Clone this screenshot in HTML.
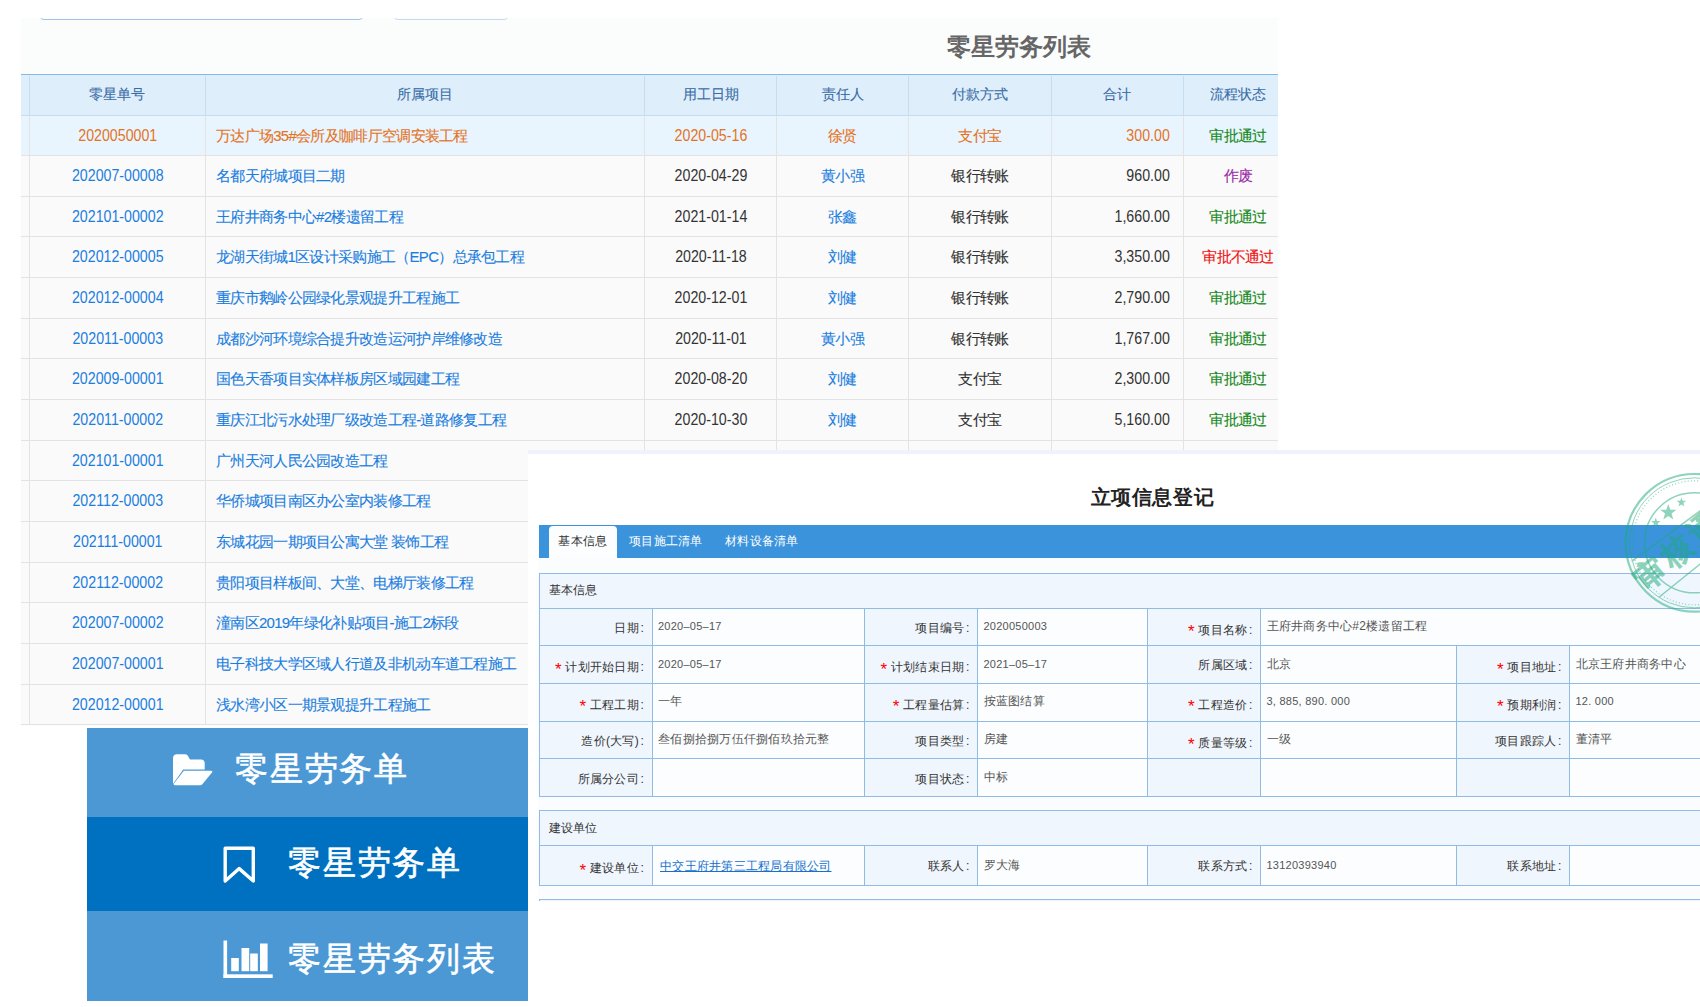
<!DOCTYPE html><html><head><meta charset="utf-8"><style>
*{margin:0;padding:0;box-sizing:border-box}
html,body{width:1700px;height:1007px;overflow:hidden;background:#fff;font-family:"Liberation Sans",sans-serif;position:relative}
.a{position:absolute}
.t{position:absolute;white-space:nowrap}
.rp{letter-spacing:0.25px}
.lt .t{-webkit-text-stroke:0.12px currentColor}
</style></head><body>
<div class="a" style="left:21px;top:18px;width:1257px;height:707.5px;background:#fbfcfc"></div>
<div class="a" style="left:0;top:18px;width:1700px;height:10px;overflow:hidden"><div class="a" style="left:39px;top:-10px;width:325px;height:11.5px;border:1px solid #9fc4e7;border-radius:5px"></div><div class="a" style="left:393px;top:-10px;width:116px;height:11.5px;border:1px solid #c3daef;border-radius:5px"></div></div>
<div class="t" style="left:900px;top:30px;width:238px;text-align:center;font-size:24px;line-height:34px;font-weight:bold;color:#666">零星劳务列表</div>
<div class="a" style="left:21px;top:74px;width:1257px;height:41.5px;background:#dfeefb;border-top:1.5px solid #82b8e8;border-bottom:1px solid #c7dcef"></div>
<div class="t" style="left:29.5px;top:74px;width:175.5px;height:41.5px;line-height:41.5px;text-align:center;font-size:14px;color:#386ca6;-webkit-text-stroke:0.12px #386ca6">零星单号</div>
<div class="t" style="left:205px;top:74px;width:439.6px;height:41.5px;line-height:41.5px;text-align:center;font-size:14px;color:#386ca6;-webkit-text-stroke:0.12px #386ca6">所属项目</div>
<div class="t" style="left:644.6px;top:74px;width:131.89999999999998px;height:41.5px;line-height:41.5px;text-align:center;font-size:14px;color:#386ca6;-webkit-text-stroke:0.12px #386ca6">用工日期</div>
<div class="t" style="left:776.5px;top:74px;width:132.0px;height:41.5px;line-height:41.5px;text-align:center;font-size:14px;color:#386ca6;-webkit-text-stroke:0.12px #386ca6">责任人</div>
<div class="t" style="left:908.5px;top:74px;width:142.70000000000005px;height:41.5px;line-height:41.5px;text-align:center;font-size:14px;color:#386ca6;-webkit-text-stroke:0.12px #386ca6">付款方式</div>
<div class="t" style="left:1051.2px;top:74px;width:131.79999999999995px;height:41.5px;line-height:41.5px;text-align:center;font-size:14px;color:#386ca6;-webkit-text-stroke:0.12px #386ca6">合计</div>
<div class="t" style="left:1183px;top:74px;width:110px;height:41.5px;line-height:41.5px;text-align:center;font-size:14px;color:#386ca6;-webkit-text-stroke:0.12px #386ca6">流程状态</div>
<div class="a lt" style="left:21px;top:0;width:1257px;height:1007px;overflow:hidden">
<div class="a" style="left:0;top:115.5px;width:1257px;height:40.66px;background:#e9f5fe;border-bottom:1px solid #e3e3e3"></div>
<div class="t" style="left:8.5px;width:175.5px;text-align:center;top:115.5px;height:40.66px;line-height:40.66px;font-size:16px;color:#e4731e;transform:scaleX(0.888);transform-origin:center;-webkit-text-stroke:0">2020050001</div>
<div class="t" style="left:195px;width:428.6px;text-align:left;top:115.5px;height:40.66px;line-height:40.66px;font-size:15px;letter-spacing:-0.7px;color:#e4731e">万达广场35#会所及咖啡厅空调安装工程</div>
<div class="t" style="left:623.6px;width:131.89999999999998px;text-align:center;top:115.5px;height:40.66px;line-height:40.66px;font-size:16px;color:#e4731e;transform:scaleX(0.888);transform-origin:center;-webkit-text-stroke:0">2020-05-16</div>
<div class="t" style="left:755.5px;width:132.0px;text-align:center;top:115.5px;height:40.66px;line-height:40.66px;font-size:15px;letter-spacing:-0.7px;color:#e4731e">徐贤</div>
<div class="t" style="left:887.5px;width:142.70000000000005px;text-align:center;top:115.5px;height:40.66px;line-height:40.66px;font-size:15px;letter-spacing:-0.7px;color:#e4731e">支付宝</div>
<div class="t" style="left:1030.2px;width:118.79999999999995px;text-align:right;top:115.5px;height:40.66px;line-height:40.66px;font-size:16px;color:#e4731e;transform:scaleX(0.888);transform-origin:right;-webkit-text-stroke:0">300.00</div>
<div class="t" style="left:1162px;width:110px;text-align:center;top:115.5px;height:40.66px;line-height:40.66px;font-size:15px;letter-spacing:-0.7px;color:#16891a">审批通过</div>
<div class="a" style="left:0;top:156.16px;width:1257px;height:40.66px;background:#fafafa;border-bottom:1px solid #e3e3e3"></div>
<div class="t" style="left:8.5px;width:175.5px;text-align:center;top:156.16px;height:40.66px;line-height:40.66px;font-size:16px;color:#1a7ee0;transform:scaleX(0.888);transform-origin:center;-webkit-text-stroke:0">202007-00008</div>
<div class="t" style="left:195px;width:428.6px;text-align:left;top:156.16px;height:40.66px;line-height:40.66px;font-size:15px;letter-spacing:-0.7px;color:#1a7ee0">名都天府城项目二期</div>
<div class="t" style="left:623.6px;width:131.89999999999998px;text-align:center;top:156.16px;height:40.66px;line-height:40.66px;font-size:16px;color:#333;transform:scaleX(0.888);transform-origin:center;-webkit-text-stroke:0">2020-04-29</div>
<div class="t" style="left:755.5px;width:132.0px;text-align:center;top:156.16px;height:40.66px;line-height:40.66px;font-size:15px;letter-spacing:-0.7px;color:#1a7ee0">黄小强</div>
<div class="t" style="left:887.5px;width:142.70000000000005px;text-align:center;top:156.16px;height:40.66px;line-height:40.66px;font-size:15px;letter-spacing:-0.7px;color:#333">银行转账</div>
<div class="t" style="left:1030.2px;width:118.79999999999995px;text-align:right;top:156.16px;height:40.66px;line-height:40.66px;font-size:16px;color:#333;transform:scaleX(0.888);transform-origin:right;-webkit-text-stroke:0">960.00</div>
<div class="t" style="left:1162px;width:110px;text-align:center;top:156.16px;height:40.66px;line-height:40.66px;font-size:15px;letter-spacing:-0.7px;color:#9a2aa8">作废</div>
<div class="a" style="left:0;top:196.82px;width:1257px;height:40.66px;background:#fafafa;border-bottom:1px solid #e3e3e3"></div>
<div class="t" style="left:8.5px;width:175.5px;text-align:center;top:196.82px;height:40.66px;line-height:40.66px;font-size:16px;color:#1a7ee0;transform:scaleX(0.888);transform-origin:center;-webkit-text-stroke:0">202101-00002</div>
<div class="t" style="left:195px;width:428.6px;text-align:left;top:196.82px;height:40.66px;line-height:40.66px;font-size:15px;letter-spacing:-0.7px;color:#1a7ee0">王府井商务中心#2楼遗留工程</div>
<div class="t" style="left:623.6px;width:131.89999999999998px;text-align:center;top:196.82px;height:40.66px;line-height:40.66px;font-size:16px;color:#333;transform:scaleX(0.888);transform-origin:center;-webkit-text-stroke:0">2021-01-14</div>
<div class="t" style="left:755.5px;width:132.0px;text-align:center;top:196.82px;height:40.66px;line-height:40.66px;font-size:15px;letter-spacing:-0.7px;color:#1a7ee0">张鑫</div>
<div class="t" style="left:887.5px;width:142.70000000000005px;text-align:center;top:196.82px;height:40.66px;line-height:40.66px;font-size:15px;letter-spacing:-0.7px;color:#333">银行转账</div>
<div class="t" style="left:1030.2px;width:118.79999999999995px;text-align:right;top:196.82px;height:40.66px;line-height:40.66px;font-size:16px;color:#333;transform:scaleX(0.888);transform-origin:right;-webkit-text-stroke:0">1,660.00</div>
<div class="t" style="left:1162px;width:110px;text-align:center;top:196.82px;height:40.66px;line-height:40.66px;font-size:15px;letter-spacing:-0.7px;color:#16891a">审批通过</div>
<div class="a" style="left:0;top:237.48px;width:1257px;height:40.66px;background:#fafafa;border-bottom:1px solid #e3e3e3"></div>
<div class="t" style="left:8.5px;width:175.5px;text-align:center;top:237.48px;height:40.66px;line-height:40.66px;font-size:16px;color:#1a7ee0;transform:scaleX(0.888);transform-origin:center;-webkit-text-stroke:0">202012-00005</div>
<div class="t" style="left:195px;width:428.6px;text-align:left;top:237.48px;height:40.66px;line-height:40.66px;font-size:15px;letter-spacing:-0.7px;color:#1a7ee0">龙湖天街城1区设计采购施工（EPC）总承包工程</div>
<div class="t" style="left:623.6px;width:131.89999999999998px;text-align:center;top:237.48px;height:40.66px;line-height:40.66px;font-size:16px;color:#333;transform:scaleX(0.888);transform-origin:center;-webkit-text-stroke:0">2020-11-18</div>
<div class="t" style="left:755.5px;width:132.0px;text-align:center;top:237.48px;height:40.66px;line-height:40.66px;font-size:15px;letter-spacing:-0.7px;color:#1a7ee0">刘健</div>
<div class="t" style="left:887.5px;width:142.70000000000005px;text-align:center;top:237.48px;height:40.66px;line-height:40.66px;font-size:15px;letter-spacing:-0.7px;color:#333">银行转账</div>
<div class="t" style="left:1030.2px;width:118.79999999999995px;text-align:right;top:237.48px;height:40.66px;line-height:40.66px;font-size:16px;color:#333;transform:scaleX(0.888);transform-origin:right;-webkit-text-stroke:0">3,350.00</div>
<div class="t" style="left:1162px;width:110px;text-align:center;top:237.48px;height:40.66px;line-height:40.66px;font-size:15px;letter-spacing:-0.7px;color:#f01010">审批不通过</div>
<div class="a" style="left:0;top:278.14px;width:1257px;height:40.66px;background:#fafafa;border-bottom:1px solid #e3e3e3"></div>
<div class="t" style="left:8.5px;width:175.5px;text-align:center;top:278.14px;height:40.66px;line-height:40.66px;font-size:16px;color:#1a7ee0;transform:scaleX(0.888);transform-origin:center;-webkit-text-stroke:0">202012-00004</div>
<div class="t" style="left:195px;width:428.6px;text-align:left;top:278.14px;height:40.66px;line-height:40.66px;font-size:15px;letter-spacing:-0.7px;color:#1a7ee0">重庆市鹅岭公园绿化景观提升工程施工</div>
<div class="t" style="left:623.6px;width:131.89999999999998px;text-align:center;top:278.14px;height:40.66px;line-height:40.66px;font-size:16px;color:#333;transform:scaleX(0.888);transform-origin:center;-webkit-text-stroke:0">2020-12-01</div>
<div class="t" style="left:755.5px;width:132.0px;text-align:center;top:278.14px;height:40.66px;line-height:40.66px;font-size:15px;letter-spacing:-0.7px;color:#1a7ee0">刘健</div>
<div class="t" style="left:887.5px;width:142.70000000000005px;text-align:center;top:278.14px;height:40.66px;line-height:40.66px;font-size:15px;letter-spacing:-0.7px;color:#333">银行转账</div>
<div class="t" style="left:1030.2px;width:118.79999999999995px;text-align:right;top:278.14px;height:40.66px;line-height:40.66px;font-size:16px;color:#333;transform:scaleX(0.888);transform-origin:right;-webkit-text-stroke:0">2,790.00</div>
<div class="t" style="left:1162px;width:110px;text-align:center;top:278.14px;height:40.66px;line-height:40.66px;font-size:15px;letter-spacing:-0.7px;color:#16891a">审批通过</div>
<div class="a" style="left:0;top:318.79999999999995px;width:1257px;height:40.66px;background:#fafafa;border-bottom:1px solid #e3e3e3"></div>
<div class="t" style="left:8.5px;width:175.5px;text-align:center;top:318.79999999999995px;height:40.66px;line-height:40.66px;font-size:16px;color:#1a7ee0;transform:scaleX(0.888);transform-origin:center;-webkit-text-stroke:0">202011-00003</div>
<div class="t" style="left:195px;width:428.6px;text-align:left;top:318.79999999999995px;height:40.66px;line-height:40.66px;font-size:15px;letter-spacing:-0.7px;color:#1a7ee0">成都沙河环境综合提升改造运河护岸维修改造</div>
<div class="t" style="left:623.6px;width:131.89999999999998px;text-align:center;top:318.79999999999995px;height:40.66px;line-height:40.66px;font-size:16px;color:#333;transform:scaleX(0.888);transform-origin:center;-webkit-text-stroke:0">2020-11-01</div>
<div class="t" style="left:755.5px;width:132.0px;text-align:center;top:318.79999999999995px;height:40.66px;line-height:40.66px;font-size:15px;letter-spacing:-0.7px;color:#1a7ee0">黄小强</div>
<div class="t" style="left:887.5px;width:142.70000000000005px;text-align:center;top:318.79999999999995px;height:40.66px;line-height:40.66px;font-size:15px;letter-spacing:-0.7px;color:#333">银行转账</div>
<div class="t" style="left:1030.2px;width:118.79999999999995px;text-align:right;top:318.79999999999995px;height:40.66px;line-height:40.66px;font-size:16px;color:#333;transform:scaleX(0.888);transform-origin:right;-webkit-text-stroke:0">1,767.00</div>
<div class="t" style="left:1162px;width:110px;text-align:center;top:318.79999999999995px;height:40.66px;line-height:40.66px;font-size:15px;letter-spacing:-0.7px;color:#16891a">审批通过</div>
<div class="a" style="left:0;top:359.46px;width:1257px;height:40.66px;background:#fafafa;border-bottom:1px solid #e3e3e3"></div>
<div class="t" style="left:8.5px;width:175.5px;text-align:center;top:359.46px;height:40.66px;line-height:40.66px;font-size:16px;color:#1a7ee0;transform:scaleX(0.888);transform-origin:center;-webkit-text-stroke:0">202009-00001</div>
<div class="t" style="left:195px;width:428.6px;text-align:left;top:359.46px;height:40.66px;line-height:40.66px;font-size:15px;letter-spacing:-0.7px;color:#1a7ee0">国色天香项目实体样板房区域园建工程</div>
<div class="t" style="left:623.6px;width:131.89999999999998px;text-align:center;top:359.46px;height:40.66px;line-height:40.66px;font-size:16px;color:#333;transform:scaleX(0.888);transform-origin:center;-webkit-text-stroke:0">2020-08-20</div>
<div class="t" style="left:755.5px;width:132.0px;text-align:center;top:359.46px;height:40.66px;line-height:40.66px;font-size:15px;letter-spacing:-0.7px;color:#1a7ee0">刘健</div>
<div class="t" style="left:887.5px;width:142.70000000000005px;text-align:center;top:359.46px;height:40.66px;line-height:40.66px;font-size:15px;letter-spacing:-0.7px;color:#333">支付宝</div>
<div class="t" style="left:1030.2px;width:118.79999999999995px;text-align:right;top:359.46px;height:40.66px;line-height:40.66px;font-size:16px;color:#333;transform:scaleX(0.888);transform-origin:right;-webkit-text-stroke:0">2,300.00</div>
<div class="t" style="left:1162px;width:110px;text-align:center;top:359.46px;height:40.66px;line-height:40.66px;font-size:15px;letter-spacing:-0.7px;color:#16891a">审批通过</div>
<div class="a" style="left:0;top:400.12px;width:1257px;height:40.66px;background:#fafafa;border-bottom:1px solid #e3e3e3"></div>
<div class="t" style="left:8.5px;width:175.5px;text-align:center;top:400.12px;height:40.66px;line-height:40.66px;font-size:16px;color:#1a7ee0;transform:scaleX(0.888);transform-origin:center;-webkit-text-stroke:0">202011-00002</div>
<div class="t" style="left:195px;width:428.6px;text-align:left;top:400.12px;height:40.66px;line-height:40.66px;font-size:15px;letter-spacing:-0.7px;color:#1a7ee0">重庆江北污水处理厂级改造工程-道路修复工程</div>
<div class="t" style="left:623.6px;width:131.89999999999998px;text-align:center;top:400.12px;height:40.66px;line-height:40.66px;font-size:16px;color:#333;transform:scaleX(0.888);transform-origin:center;-webkit-text-stroke:0">2020-10-30</div>
<div class="t" style="left:755.5px;width:132.0px;text-align:center;top:400.12px;height:40.66px;line-height:40.66px;font-size:15px;letter-spacing:-0.7px;color:#1a7ee0">刘健</div>
<div class="t" style="left:887.5px;width:142.70000000000005px;text-align:center;top:400.12px;height:40.66px;line-height:40.66px;font-size:15px;letter-spacing:-0.7px;color:#333">支付宝</div>
<div class="t" style="left:1030.2px;width:118.79999999999995px;text-align:right;top:400.12px;height:40.66px;line-height:40.66px;font-size:16px;color:#333;transform:scaleX(0.888);transform-origin:right;-webkit-text-stroke:0">5,160.00</div>
<div class="t" style="left:1162px;width:110px;text-align:center;top:400.12px;height:40.66px;line-height:40.66px;font-size:15px;letter-spacing:-0.7px;color:#16891a">审批通过</div>
<div class="a" style="left:0;top:440.78px;width:1257px;height:40.66px;background:#fafafa;border-bottom:1px solid #e3e3e3"></div>
<div class="t" style="left:8.5px;width:175.5px;text-align:center;top:440.78px;height:40.66px;line-height:40.66px;font-size:16px;color:#1a7ee0;transform:scaleX(0.888);transform-origin:center;-webkit-text-stroke:0">202101-00001</div>
<div class="t" style="left:195px;width:428.6px;text-align:left;top:440.78px;height:40.66px;line-height:40.66px;font-size:15px;letter-spacing:-0.7px;color:#1a7ee0">广州天河人民公园改造工程</div>
<div class="a" style="left:0;top:481.43999999999994px;width:1257px;height:40.66px;background:#fafafa;border-bottom:1px solid #e3e3e3"></div>
<div class="t" style="left:8.5px;width:175.5px;text-align:center;top:481.43999999999994px;height:40.66px;line-height:40.66px;font-size:16px;color:#1a7ee0;transform:scaleX(0.888);transform-origin:center;-webkit-text-stroke:0">202112-00003</div>
<div class="t" style="left:195px;width:428.6px;text-align:left;top:481.43999999999994px;height:40.66px;line-height:40.66px;font-size:15px;letter-spacing:-0.7px;color:#1a7ee0">华侨城项目南区办公室内装修工程</div>
<div class="a" style="left:0;top:522.0999999999999px;width:1257px;height:40.66px;background:#fafafa;border-bottom:1px solid #e3e3e3"></div>
<div class="t" style="left:8.5px;width:175.5px;text-align:center;top:522.0999999999999px;height:40.66px;line-height:40.66px;font-size:16px;color:#1a7ee0;transform:scaleX(0.888);transform-origin:center;-webkit-text-stroke:0">202111-00001</div>
<div class="t" style="left:195px;width:428.6px;text-align:left;top:522.0999999999999px;height:40.66px;line-height:40.66px;font-size:15px;letter-spacing:-0.7px;color:#1a7ee0">东城花园一期项目公寓大堂 装饰工程</div>
<div class="a" style="left:0;top:562.76px;width:1257px;height:40.66px;background:#fafafa;border-bottom:1px solid #e3e3e3"></div>
<div class="t" style="left:8.5px;width:175.5px;text-align:center;top:562.76px;height:40.66px;line-height:40.66px;font-size:16px;color:#1a7ee0;transform:scaleX(0.888);transform-origin:center;-webkit-text-stroke:0">202112-00002</div>
<div class="t" style="left:195px;width:428.6px;text-align:left;top:562.76px;height:40.66px;line-height:40.66px;font-size:15px;letter-spacing:-0.7px;color:#1a7ee0">贵阳项目样板间、大堂、电梯厅装修工程</div>
<div class="a" style="left:0;top:603.42px;width:1257px;height:40.66px;background:#fafafa;border-bottom:1px solid #e3e3e3"></div>
<div class="t" style="left:8.5px;width:175.5px;text-align:center;top:603.42px;height:40.66px;line-height:40.66px;font-size:16px;color:#1a7ee0;transform:scaleX(0.888);transform-origin:center;-webkit-text-stroke:0">202007-00002</div>
<div class="t" style="left:195px;width:428.6px;text-align:left;top:603.42px;height:40.66px;line-height:40.66px;font-size:15px;letter-spacing:-0.7px;color:#1a7ee0">潼南区2019年绿化补贴项目-施工2标段</div>
<div class="a" style="left:0;top:644.0799999999999px;width:1257px;height:40.66px;background:#fafafa;border-bottom:1px solid #e3e3e3"></div>
<div class="t" style="left:8.5px;width:175.5px;text-align:center;top:644.0799999999999px;height:40.66px;line-height:40.66px;font-size:16px;color:#1a7ee0;transform:scaleX(0.888);transform-origin:center;-webkit-text-stroke:0">202007-00001</div>
<div class="t" style="left:195px;width:428.6px;text-align:left;top:644.0799999999999px;height:40.66px;line-height:40.66px;font-size:15px;letter-spacing:-0.7px;color:#1a7ee0">电子科技大学区域人行道及非机动车道工程施工</div>
<div class="a" style="left:0;top:684.74px;width:1257px;height:40.66px;background:#fafafa;border-bottom:1px solid #e3e3e3"></div>
<div class="t" style="left:8.5px;width:175.5px;text-align:center;top:684.74px;height:40.66px;line-height:40.66px;font-size:16px;color:#1a7ee0;transform:scaleX(0.888);transform-origin:center;-webkit-text-stroke:0">202012-00001</div>
<div class="t" style="left:195px;width:428.6px;text-align:left;top:684.74px;height:40.66px;line-height:40.66px;font-size:15px;letter-spacing:-0.7px;color:#1a7ee0">浅水湾小区一期景观提升工程施工</div>
<div class="a" style="left:8.0px;top:75.5px;width:1px;height:39.0px;background:#c6dcef"></div>
<div class="a" style="left:8.0px;top:115.5px;width:1px;height:609.9px;background:#e3e3e3"></div>
<div class="a" style="left:183.5px;top:75.5px;width:1px;height:39.0px;background:#c6dcef"></div>
<div class="a" style="left:183.5px;top:115.5px;width:1px;height:609.9px;background:#e3e3e3"></div>
<div class="a" style="left:623.1px;top:75.5px;width:1px;height:39.0px;background:#c6dcef"></div>
<div class="a" style="left:623.1px;top:115.5px;width:1px;height:609.9px;background:#e3e3e3"></div>
<div class="a" style="left:755.0px;top:75.5px;width:1px;height:39.0px;background:#c6dcef"></div>
<div class="a" style="left:755.0px;top:115.5px;width:1px;height:609.9px;background:#e3e3e3"></div>
<div class="a" style="left:887.0px;top:75.5px;width:1px;height:39.0px;background:#c6dcef"></div>
<div class="a" style="left:887.0px;top:115.5px;width:1px;height:609.9px;background:#e3e3e3"></div>
<div class="a" style="left:1029.7px;top:75.5px;width:1px;height:39.0px;background:#c6dcef"></div>
<div class="a" style="left:1029.7px;top:115.5px;width:1px;height:609.9px;background:#e3e3e3"></div>
<div class="a" style="left:1161.5px;top:75.5px;width:1px;height:39.0px;background:#c6dcef"></div>
<div class="a" style="left:1161.5px;top:115.5px;width:1px;height:609.9px;background:#e3e3e3"></div>
</div>
<div class="a" style="left:87px;top:728px;width:441px;height:89px;background:#4b98d5"></div>
<div class="a" style="left:87px;top:817px;width:441px;height:94px;background:#0070c1"></div>
<div class="a" style="left:87px;top:911px;width:441px;height:89.6px;background:#4b98d5"></div>
<div class="t" style="left:235px;top:744.5px;font-size:33px;line-height:48px;letter-spacing:1.8px;color:#fff;-webkit-text-stroke:0.6px #fff">零星劳务单</div>
<div class="t" style="left:288px;top:838.5px;font-size:33px;line-height:48px;letter-spacing:1.8px;color:#fff;-webkit-text-stroke:0.6px #fff">零星劳务单</div>
<div class="t" style="left:288px;top:934.5px;font-size:33px;line-height:48px;letter-spacing:1.8px;color:#fff;-webkit-text-stroke:0.6px #fff">零星劳务列表</div>
<svg class="a" style="left:0;top:0" width="1700" height="1007" viewBox="0 0 1700 1007">
<path d="M173,758 Q173,754.2 177,754.2 L185.5,754.2 Q187,754.2 188,756 L190,759.6 L201,759.6 Q204.7,759.6 204.7,763.5 L204.7,769.6 L183.2,769.6 L173,784 Z" fill="#fff"/>
<path d="M175,785.2 Q173,785.2 174,783.6 L183.8,770.8 L211,770.8 Q213.2,770.8 212,772.5 L202.5,784 Q201.5,785.2 200,785.2 Z" fill="#fff"/>
<path d="M225.2,881 L225.2,848.2 L253.3,848.2 L253.3,881 L239.2,868.6 Z" fill="none" stroke="#fff" stroke-width="3.4" stroke-linejoin="round"/>
<rect x="223.5" y="940.5" width="3.6" height="37.5" fill="#fff"/>
<rect x="223.5" y="974.3" width="49.2" height="3.7" fill="#fff"/>
<rect x="231.2" y="958" width="7.6" height="13.2" fill="#fff"/>
<rect x="241.5" y="948" width="7.7" height="23.2" fill="#fff"/>
<rect x="250.2" y="953.5" width="7.6" height="17.7" fill="#fff"/>
<rect x="260" y="943.5" width="7.6" height="27.7" fill="#fff"/>
</svg>
<div class="a" style="left:528px;top:449.8px;width:1172px;height:452px;background:#fff"></div>
<div class="a" style="left:528px;top:449.8px;width:1172px;height:4.2px;background:#eef2fb"></div>
<div class="a" style="left:538px;top:558px;width:1162px;height:343.5px;background:#fafcfe"></div>
<div class="t rp" style="left:1051.5px;top:481.5px;width:202px;text-align:center;font-size:20px;line-height:30px;font-weight:bold;letter-spacing:0.6px;color:#222">立项信息登记</div>
<div class="a" style="left:538.5px;top:524.5px;width:1162px;height:33.7px;background:#3b93dc"></div>
<div class="a" style="left:548.5px;top:525.5px;width:68.5px;height:32.5px;background:#fbfdff;border-radius:4px 4px 0 0"></div>
<div class="t rp" style="left:548.5px;top:525.5px;width:68.5px;text-align:center;font-size:12px;line-height:30px;color:#333">基本信息</div>
<div class="t rp" style="left:629px;top:525.5px;font-size:12px;line-height:30px;color:#fff">项目施工清单</div>
<div class="t rp" style="left:725px;top:525.5px;font-size:12px;line-height:30px;color:#fff">材料设备清单</div>
<div class="a" style="left:538.5px;top:573.2px;width:1161.5px;height:35.0px;background:#f0f6fe;"></div>
<div class="t rp" style="left:548.5px;top:573.2px;font-size:12px;line-height:35.0px;color:#333">基本信息</div>
<div class="a" style="left:538.5px;top:608.2px;width:113.5px;height:37.299999999999955px;background:#f0f6fd;"></div>
<div class="t rp" style="left:538.5px;width:105.5px;text-align:right;top:609.8000000000001px;line-height:37.299999999999955px;font-size:12px;color:#333">日期<span style="margin-left:1.5px">:</span></div>
<div class="a" style="left:652px;top:608.2px;width:212.5px;height:37.299999999999955px;background:#fbfdfe;"></div>
<div class="t rp" style="left:658px;top:609.2px;line-height:35.299999999999955px;font-size:11px;color:#555">2020–05–17</div>
<div class="a" style="left:864.5px;top:608.2px;width:113.0px;height:37.299999999999955px;background:#f0f6fd;"></div>
<div class="t rp" style="left:864.5px;width:105.0px;text-align:right;top:609.8000000000001px;line-height:37.299999999999955px;font-size:12px;color:#333">项目编号<span style="margin-left:1.5px">:</span></div>
<div class="a" style="left:977.5px;top:608.2px;width:170.0px;height:37.299999999999955px;background:#fbfdfe;"></div>
<div class="t rp" style="left:983.5px;top:609.2px;line-height:35.299999999999955px;font-size:11px;color:#555">2020050003</div>
<div class="a" style="left:1147.5px;top:608.2px;width:113.0px;height:37.299999999999955px;background:#f0f6fd;"></div>
<div class="t rp" style="left:1147.5px;width:105.0px;text-align:right;top:609.8000000000001px;line-height:37.299999999999955px;font-size:12px;color:#333"><span style="color:#f00;font-size:17px;margin-right:3.5px;position:relative;top:3.5px">*</span>项目名称<span style="margin-left:1.5px">:</span></div>
<div class="a" style="left:1260.5px;top:608.2px;width:539.5px;height:37.299999999999955px;background:#fbfdfe;"></div>
<div class="t rp" style="left:1266.5px;top:609.2px;line-height:35.299999999999955px;font-size:12px;color:#555">王府井商务中心#2楼遗留工程</div>
<div class="a" style="left:538.5px;top:645.5px;width:113.5px;height:37.799999999999955px;background:#f0f6fd;"></div>
<div class="t rp" style="left:538.5px;width:105.5px;text-align:right;top:647.1px;line-height:37.799999999999955px;font-size:12px;color:#333"><span style="color:#f00;font-size:17px;margin-right:3.5px;position:relative;top:3.5px">*</span>计划开始日期<span style="margin-left:1.5px">:</span></div>
<div class="a" style="left:652px;top:645.5px;width:212.5px;height:37.799999999999955px;background:#fbfdfe;"></div>
<div class="t rp" style="left:658px;top:646.5px;line-height:35.799999999999955px;font-size:11px;color:#555">2020–05–17</div>
<div class="a" style="left:864.5px;top:645.5px;width:113.0px;height:37.799999999999955px;background:#f0f6fd;"></div>
<div class="t rp" style="left:864.5px;width:105.0px;text-align:right;top:647.1px;line-height:37.799999999999955px;font-size:12px;color:#333"><span style="color:#f00;font-size:17px;margin-right:3.5px;position:relative;top:3.5px">*</span>计划结束日期<span style="margin-left:1.5px">:</span></div>
<div class="a" style="left:977.5px;top:645.5px;width:170.0px;height:37.799999999999955px;background:#fbfdfe;"></div>
<div class="t rp" style="left:983.5px;top:646.5px;line-height:35.799999999999955px;font-size:11px;color:#555">2021–05–17</div>
<div class="a" style="left:1147.5px;top:645.5px;width:113.0px;height:37.799999999999955px;background:#f0f6fd;"></div>
<div class="t rp" style="left:1147.5px;width:105.0px;text-align:right;top:647.1px;line-height:37.799999999999955px;font-size:12px;color:#333">所属区域<span style="margin-left:1.5px">:</span></div>
<div class="a" style="left:1260.5px;top:645.5px;width:196.0px;height:37.799999999999955px;background:#fbfdfe;"></div>
<div class="t rp" style="left:1266.5px;top:646.5px;line-height:35.799999999999955px;font-size:12px;color:#555">北京</div>
<div class="a" style="left:1456.5px;top:645.5px;width:113.0px;height:37.799999999999955px;background:#f0f6fd;"></div>
<div class="t rp" style="left:1456.5px;width:105.0px;text-align:right;top:647.1px;line-height:37.799999999999955px;font-size:12px;color:#333"><span style="color:#f00;font-size:17px;margin-right:3.5px;position:relative;top:3.5px">*</span>项目地址<span style="margin-left:1.5px">:</span></div>
<div class="a" style="left:1569.5px;top:645.5px;width:230.5px;height:37.799999999999955px;background:#fbfdfe;"></div>
<div class="t rp" style="left:1575.5px;top:646.5px;line-height:35.799999999999955px;font-size:12px;color:#555">北京王府井商务中心</div>
<div class="a" style="left:538.5px;top:683.3px;width:113.5px;height:37.80000000000007px;background:#f0f6fd;"></div>
<div class="t rp" style="left:538.5px;width:105.5px;text-align:right;top:684.9px;line-height:37.80000000000007px;font-size:12px;color:#333"><span style="color:#f00;font-size:17px;margin-right:3.5px;position:relative;top:3.5px">*</span>工程工期<span style="margin-left:1.5px">:</span></div>
<div class="a" style="left:652px;top:683.3px;width:212.5px;height:37.80000000000007px;background:#fbfdfe;"></div>
<div class="t rp" style="left:658px;top:684.3px;line-height:35.80000000000007px;font-size:12px;color:#555">一年</div>
<div class="a" style="left:864.5px;top:683.3px;width:113.0px;height:37.80000000000007px;background:#f0f6fd;"></div>
<div class="t rp" style="left:864.5px;width:105.0px;text-align:right;top:684.9px;line-height:37.80000000000007px;font-size:12px;color:#333"><span style="color:#f00;font-size:17px;margin-right:3.5px;position:relative;top:3.5px">*</span>工程量估算<span style="margin-left:1.5px">:</span></div>
<div class="a" style="left:977.5px;top:683.3px;width:170.0px;height:37.80000000000007px;background:#fbfdfe;"></div>
<div class="t rp" style="left:983.5px;top:684.3px;line-height:35.80000000000007px;font-size:12px;color:#555">按蓝图结算</div>
<div class="a" style="left:1147.5px;top:683.3px;width:113.0px;height:37.80000000000007px;background:#f0f6fd;"></div>
<div class="t rp" style="left:1147.5px;width:105.0px;text-align:right;top:684.9px;line-height:37.80000000000007px;font-size:12px;color:#333"><span style="color:#f00;font-size:17px;margin-right:3.5px;position:relative;top:3.5px">*</span>工程造价<span style="margin-left:1.5px">:</span></div>
<div class="a" style="left:1260.5px;top:683.3px;width:196.0px;height:37.80000000000007px;background:#fbfdfe;"></div>
<div class="t rp" style="left:1266.5px;top:684.3px;line-height:35.80000000000007px;font-size:11px;color:#555">3, 885, 890. 000</div>
<div class="a" style="left:1456.5px;top:683.3px;width:113.0px;height:37.80000000000007px;background:#f0f6fd;"></div>
<div class="t rp" style="left:1456.5px;width:105.0px;text-align:right;top:684.9px;line-height:37.80000000000007px;font-size:12px;color:#333"><span style="color:#f00;font-size:17px;margin-right:3.5px;position:relative;top:3.5px">*</span>预期利润<span style="margin-left:1.5px">:</span></div>
<div class="a" style="left:1569.5px;top:683.3px;width:230.5px;height:37.80000000000007px;background:#fbfdfe;"></div>
<div class="t rp" style="left:1575.5px;top:684.3px;line-height:35.80000000000007px;font-size:11px;color:#555">12. 000</div>
<div class="a" style="left:538.5px;top:721.1px;width:113.5px;height:37.799999999999955px;background:#f0f6fd;"></div>
<div class="t rp" style="left:538.5px;width:105.5px;text-align:right;top:722.7px;line-height:37.799999999999955px;font-size:12px;color:#333">造价(大写)<span style="margin-left:1.5px">:</span></div>
<div class="a" style="left:652px;top:721.1px;width:212.5px;height:37.799999999999955px;background:#fbfdfe;"></div>
<div class="t rp" style="left:658px;top:722.1px;line-height:35.799999999999955px;font-size:12px;color:#555">叁佰捌拾捌万伍仟捌佰玖拾元整</div>
<div class="a" style="left:864.5px;top:721.1px;width:113.0px;height:37.799999999999955px;background:#f0f6fd;"></div>
<div class="t rp" style="left:864.5px;width:105.0px;text-align:right;top:722.7px;line-height:37.799999999999955px;font-size:12px;color:#333">项目类型<span style="margin-left:1.5px">:</span></div>
<div class="a" style="left:977.5px;top:721.1px;width:170.0px;height:37.799999999999955px;background:#fbfdfe;"></div>
<div class="t rp" style="left:983.5px;top:722.1px;line-height:35.799999999999955px;font-size:12px;color:#555">房建</div>
<div class="a" style="left:1147.5px;top:721.1px;width:113.0px;height:37.799999999999955px;background:#f0f6fd;"></div>
<div class="t rp" style="left:1147.5px;width:105.0px;text-align:right;top:722.7px;line-height:37.799999999999955px;font-size:12px;color:#333"><span style="color:#f00;font-size:17px;margin-right:3.5px;position:relative;top:3.5px">*</span>质量等级<span style="margin-left:1.5px">:</span></div>
<div class="a" style="left:1260.5px;top:721.1px;width:196.0px;height:37.799999999999955px;background:#fbfdfe;"></div>
<div class="t rp" style="left:1266.5px;top:722.1px;line-height:35.799999999999955px;font-size:12px;color:#555">一级</div>
<div class="a" style="left:1456.5px;top:721.1px;width:113.0px;height:37.799999999999955px;background:#f0f6fd;"></div>
<div class="t rp" style="left:1456.5px;width:105.0px;text-align:right;top:722.7px;line-height:37.799999999999955px;font-size:12px;color:#333">项目跟踪人<span style="margin-left:1.5px">:</span></div>
<div class="a" style="left:1569.5px;top:721.1px;width:230.5px;height:37.799999999999955px;background:#fbfdfe;"></div>
<div class="t rp" style="left:1575.5px;top:722.1px;line-height:35.799999999999955px;font-size:12px;color:#555">董清平</div>
<div class="a" style="left:538.5px;top:758.9px;width:113.5px;height:37.5px;background:#f0f6fd;"></div>
<div class="t rp" style="left:538.5px;width:105.5px;text-align:right;top:760.5px;line-height:37.5px;font-size:12px;color:#333">所属分公司<span style="margin-left:1.5px">:</span></div>
<div class="a" style="left:652px;top:758.9px;width:212.5px;height:37.5px;background:#fbfdfe;"></div>
<div class="a" style="left:864.5px;top:758.9px;width:113.0px;height:37.5px;background:#f0f6fd;"></div>
<div class="t rp" style="left:864.5px;width:105.0px;text-align:right;top:760.5px;line-height:37.5px;font-size:12px;color:#333">项目状态<span style="margin-left:1.5px">:</span></div>
<div class="a" style="left:977.5px;top:758.9px;width:170.0px;height:37.5px;background:#fbfdfe;"></div>
<div class="t rp" style="left:983.5px;top:759.9px;line-height:35.5px;font-size:12px;color:#555">中标</div>
<div class="a" style="left:1147.5px;top:758.9px;width:113.0px;height:37.5px;background:#f0f6fd;"></div>
<div class="a" style="left:1260.5px;top:758.9px;width:196.0px;height:37.5px;background:#fbfdfe;"></div>
<div class="a" style="left:1456.5px;top:758.9px;width:113.0px;height:37.5px;background:#f0f6fd;"></div>
<div class="a" style="left:1569.5px;top:758.9px;width:230.5px;height:37.5px;background:#fbfdfe;"></div>
<div class="a" style="left:538.5px;top:810.9px;width:1161.5px;height:34.60000000000002px;background:#f0f6fe;"></div>
<div class="t rp" style="left:548.5px;top:810.9px;font-size:12px;line-height:34.60000000000002px;color:#333">建设单位</div>
<div class="a" style="left:538.5px;top:845.5px;width:113.5px;height:39.700000000000045px;background:#f0f6fd;"></div>
<div class="t rp" style="left:538.5px;width:105.5px;text-align:right;top:847.1px;line-height:39.700000000000045px;font-size:12px;color:#333"><span style="color:#f00;font-size:17px;margin-right:3.5px;position:relative;top:3.5px">*</span>建设单位<span style="margin-left:1.5px">:</span></div>
<div class="a" style="left:652px;top:845.5px;width:212.5px;height:39.700000000000045px;background:#fbfdfe;"></div>
<div class="t rp" style="left:658px;top:846.5px;line-height:37.700000000000045px;font-size:12px;color:#555"><span style="color:#1670cc;text-decoration:underline;position:relative;left:2px;top:1.5px">中交王府井第三工程局有限公司</span></div>
<div class="a" style="left:864.5px;top:845.5px;width:113.0px;height:39.700000000000045px;background:#f0f6fd;"></div>
<div class="t rp" style="left:864.5px;width:105.0px;text-align:right;top:847.1px;line-height:39.700000000000045px;font-size:12px;color:#333">联系人<span style="margin-left:1.5px">:</span></div>
<div class="a" style="left:977.5px;top:845.5px;width:170.0px;height:39.700000000000045px;background:#fbfdfe;"></div>
<div class="t rp" style="left:983.5px;top:846.5px;line-height:37.700000000000045px;font-size:12px;color:#555">罗大海</div>
<div class="a" style="left:1147.5px;top:845.5px;width:113.0px;height:39.700000000000045px;background:#f0f6fd;"></div>
<div class="t rp" style="left:1147.5px;width:105.0px;text-align:right;top:847.1px;line-height:39.700000000000045px;font-size:12px;color:#333">联系方式<span style="margin-left:1.5px">:</span></div>
<div class="a" style="left:1260.5px;top:845.5px;width:196.0px;height:39.700000000000045px;background:#fbfdfe;"></div>
<div class="t rp" style="left:1266.5px;top:846.5px;line-height:37.700000000000045px;font-size:11px;color:#555">13120393940</div>
<div class="a" style="left:1456.5px;top:845.5px;width:113.0px;height:39.700000000000045px;background:#f0f6fd;"></div>
<div class="t rp" style="left:1456.5px;width:105.0px;text-align:right;top:847.1px;line-height:39.700000000000045px;font-size:12px;color:#333">联系地址<span style="margin-left:1.5px">:</span></div>
<div class="a" style="left:1569.5px;top:845.5px;width:230.5px;height:39.700000000000045px;background:#fbfdfe;"></div>
<div class="a" style="left:538.5px;top:899.1px;width:1161.5px;height:2.3999999999999773px;background:#f0f6fe;"></div>
<div class="a" style="left:651.5px;top:608.2px;width:1px;height:37.299999999999955px;background:#8fbbe5"></div>
<div class="a" style="left:864.0px;top:608.2px;width:1px;height:37.299999999999955px;background:#8fbbe5"></div>
<div class="a" style="left:977.0px;top:608.2px;width:1px;height:37.299999999999955px;background:#8fbbe5"></div>
<div class="a" style="left:1147.0px;top:608.2px;width:1px;height:37.299999999999955px;background:#8fbbe5"></div>
<div class="a" style="left:1260.0px;top:608.2px;width:1px;height:37.299999999999955px;background:#8fbbe5"></div>
<div class="a" style="left:538.5px;top:645.0px;width:1161.5px;height:1px;background:#8fbbe5"></div>
<div class="a" style="left:651.5px;top:645.5px;width:1px;height:37.799999999999955px;background:#8fbbe5"></div>
<div class="a" style="left:864.0px;top:645.5px;width:1px;height:37.799999999999955px;background:#8fbbe5"></div>
<div class="a" style="left:977.0px;top:645.5px;width:1px;height:37.799999999999955px;background:#8fbbe5"></div>
<div class="a" style="left:1147.0px;top:645.5px;width:1px;height:37.799999999999955px;background:#8fbbe5"></div>
<div class="a" style="left:1260.0px;top:645.5px;width:1px;height:37.799999999999955px;background:#8fbbe5"></div>
<div class="a" style="left:1456.0px;top:645.5px;width:1px;height:37.799999999999955px;background:#8fbbe5"></div>
<div class="a" style="left:1569.0px;top:645.5px;width:1px;height:37.799999999999955px;background:#8fbbe5"></div>
<div class="a" style="left:538.5px;top:682.8px;width:1161.5px;height:1px;background:#8fbbe5"></div>
<div class="a" style="left:651.5px;top:683.3px;width:1px;height:37.80000000000007px;background:#8fbbe5"></div>
<div class="a" style="left:864.0px;top:683.3px;width:1px;height:37.80000000000007px;background:#8fbbe5"></div>
<div class="a" style="left:977.0px;top:683.3px;width:1px;height:37.80000000000007px;background:#8fbbe5"></div>
<div class="a" style="left:1147.0px;top:683.3px;width:1px;height:37.80000000000007px;background:#8fbbe5"></div>
<div class="a" style="left:1260.0px;top:683.3px;width:1px;height:37.80000000000007px;background:#8fbbe5"></div>
<div class="a" style="left:1456.0px;top:683.3px;width:1px;height:37.80000000000007px;background:#8fbbe5"></div>
<div class="a" style="left:1569.0px;top:683.3px;width:1px;height:37.80000000000007px;background:#8fbbe5"></div>
<div class="a" style="left:538.5px;top:720.6px;width:1161.5px;height:1px;background:#8fbbe5"></div>
<div class="a" style="left:651.5px;top:721.1px;width:1px;height:37.799999999999955px;background:#8fbbe5"></div>
<div class="a" style="left:864.0px;top:721.1px;width:1px;height:37.799999999999955px;background:#8fbbe5"></div>
<div class="a" style="left:977.0px;top:721.1px;width:1px;height:37.799999999999955px;background:#8fbbe5"></div>
<div class="a" style="left:1147.0px;top:721.1px;width:1px;height:37.799999999999955px;background:#8fbbe5"></div>
<div class="a" style="left:1260.0px;top:721.1px;width:1px;height:37.799999999999955px;background:#8fbbe5"></div>
<div class="a" style="left:1456.0px;top:721.1px;width:1px;height:37.799999999999955px;background:#8fbbe5"></div>
<div class="a" style="left:1569.0px;top:721.1px;width:1px;height:37.799999999999955px;background:#8fbbe5"></div>
<div class="a" style="left:538.5px;top:758.4px;width:1161.5px;height:1px;background:#8fbbe5"></div>
<div class="a" style="left:651.5px;top:758.9px;width:1px;height:37.5px;background:#8fbbe5"></div>
<div class="a" style="left:864.0px;top:758.9px;width:1px;height:37.5px;background:#8fbbe5"></div>
<div class="a" style="left:977.0px;top:758.9px;width:1px;height:37.5px;background:#8fbbe5"></div>
<div class="a" style="left:1147.0px;top:758.9px;width:1px;height:37.5px;background:#8fbbe5"></div>
<div class="a" style="left:1260.0px;top:758.9px;width:1px;height:37.5px;background:#8fbbe5"></div>
<div class="a" style="left:1456.0px;top:758.9px;width:1px;height:37.5px;background:#8fbbe5"></div>
<div class="a" style="left:1569.0px;top:758.9px;width:1px;height:37.5px;background:#8fbbe5"></div>
<div class="a" style="left:538.5px;top:795.9px;width:1161.5px;height:1px;background:#8fbbe5"></div>
<div class="a" style="left:538.5px;top:572.7px;width:1161.5px;height:1px;background:#8fbbe5"></div>
<div class="a" style="left:538.5px;top:607.7px;width:1161.5px;height:1px;background:#8fbbe5"></div>
<div class="a" style="left:538.5px;top:573.2px;width:1px;height:223.19999999999993px;background:#8fbbe5"></div>
<div class="a" style="left:651.5px;top:845.5px;width:1px;height:39.700000000000045px;background:#8fbbe5"></div>
<div class="a" style="left:864.0px;top:845.5px;width:1px;height:39.700000000000045px;background:#8fbbe5"></div>
<div class="a" style="left:977.0px;top:845.5px;width:1px;height:39.700000000000045px;background:#8fbbe5"></div>
<div class="a" style="left:1147.0px;top:845.5px;width:1px;height:39.700000000000045px;background:#8fbbe5"></div>
<div class="a" style="left:1260.0px;top:845.5px;width:1px;height:39.700000000000045px;background:#8fbbe5"></div>
<div class="a" style="left:1456.0px;top:845.5px;width:1px;height:39.700000000000045px;background:#8fbbe5"></div>
<div class="a" style="left:1569.0px;top:845.5px;width:1px;height:39.700000000000045px;background:#8fbbe5"></div>
<div class="a" style="left:538.5px;top:884.7px;width:1161.5px;height:1px;background:#8fbbe5"></div>
<div class="a" style="left:538.5px;top:810.4px;width:1161.5px;height:1px;background:#8fbbe5"></div>
<div class="a" style="left:538.5px;top:845.0px;width:1161.5px;height:1px;background:#8fbbe5"></div>
<div class="a" style="left:538.5px;top:810.9px;width:1px;height:74.30000000000007px;background:#8fbbe5"></div>
<div class="a" style="left:538.5px;top:899.1px;width:1161.5px;height:1px;background:#8fbbe5"></div>
<div class="a" style="left:538.5px;top:899.6px;width:1px;height:1.8999999999999773px;background:#8fbbe5"></div>
<svg class="a" style="left:0;top:0" width="1700" height="1007" viewBox="0 0 1700 1007">
<defs><clipPath id="stc"><circle cx="1694.5" cy="542.8" r="65.5"/></clipPath></defs>
<g fill="none" stroke="rgb(30,170,120)" opacity="0.5">
<circle cx="1694.5" cy="542.8" r="68.8" stroke-width="2.2"/>
<circle cx="1694.5" cy="542.8" r="65" stroke-width="1"/>
<circle cx="1694.5" cy="542.8" r="62" stroke-width="1.2" stroke-dasharray="1 2.2"/>
<circle cx="1694.5" cy="542.8" r="50" stroke-width="1.5"/>
<g clip-path="url(#stc)"><line x1="1620" y1="569.9" x2="1720" y2="496.3" stroke-width="1.5"/>
<line x1="1650" y1="604.5" x2="1720" y2="548" stroke-width="1.5"/></g>
</g>
<g fill="rgb(30,170,120)" opacity="0.5">
<polygon points="1668.30,504.00 1670.30,509.75 1676.38,509.87 1671.53,513.55 1673.30,519.38 1668.30,515.90 1663.30,519.38 1665.07,513.55 1660.22,509.87 1666.30,509.75"/><polygon points="1655.80,517.60 1656.98,520.98 1660.56,521.05 1657.70,523.22 1658.74,526.65 1655.80,524.60 1652.86,526.65 1653.90,523.22 1651.04,521.05 1654.62,520.98"/><polygon points="1681.40,497.40 1682.58,500.78 1686.16,500.85 1683.30,503.02 1684.34,506.45 1681.40,504.40 1678.46,506.45 1679.50,503.02 1676.64,500.85 1680.22,500.78"/>
<text transform="translate(1649.8,573.9) rotate(-40)" font-family="Liberation Sans, sans-serif" font-weight="bold" font-size="31" x="-15.5" y="11" letter-spacing="4.5" stroke="rgb(30,170,120)" stroke-width="0.4">审核通过</text>
</g>
</svg>
</body></html>
